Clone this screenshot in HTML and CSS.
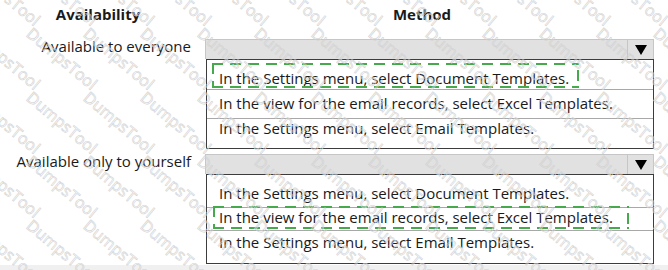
FILE: index.html
```html
<!DOCTYPE html>
<html>
<head>
    <meta charset="UTF-8">
    <title>Availability and Method</title>
    <link rel="stylesheet" href="styles.css">
</head>
<body>
    <div class="sheet">
        <div class="heads">
            <div class="head head-availability">Availability</div>
            <div class="head head-method">Method</div>
        </div>

        <!-- First answer area -->
        <div class="question q-first">
            <div class="label">Available to everyone</div>
            <div class="field">
                <div class="select-bar"><span class="arrow"><span class="tri"></span></span></div>
                <div class="options">
                    <div class="option r1"><span class="pick pick-a">In the Settings menu, select Document Templates.</span></div>
                    <div class="option r2">In the view for the email records, select Excel Templates.</div>
                    <div class="option r3">In the Settings menu, select Email Templates.</div>
                </div>
            </div>
        </div>

        <!-- Second answer area -->
        <div class="question q-second">
            <div class="label">Available only to yourself</div>
            <div class="field">
                <div class="select-bar"><span class="arrow"><span class="tri"></span></span></div>
                <div class="options">
                    <div class="option s1">In the Settings menu, select Document Templates.</div>
                    <div class="option s2"><span class="pick pick-b">In the view for the email records, select Excel Templates.</span></div>
                    <div class="option s3">In the Settings menu, select Email Templates.</div>
                </div>
            </div>
        </div>

        <div class="strip"></div>

        <!-- faint diagonal watermark over everything -->
        <div class="watermark">
            <span>DumpsTool</span><span>DumpsTool</span><span>DumpsTool</span><span>DumpsTool</span><span>DumpsTool</span><span>DumpsTool</span><span>DumpsTool</span><span>DumpsTool</span><span>DumpsTool</span><span>DumpsTool</span><span>DumpsTool</span><span>DumpsTool</span><span>DumpsTool</span>
            <span>DumpsTool</span><span>DumpsTool</span><span>DumpsTool</span><span>DumpsTool</span><span>DumpsTool</span><span>DumpsTool</span><span>DumpsTool</span><span>DumpsTool</span><span>DumpsTool</span><span>DumpsTool</span><span>DumpsTool</span><span>DumpsTool</span><span>DumpsTool</span>
            <span>DumpsTool</span><span>DumpsTool</span><span>DumpsTool</span><span>DumpsTool</span><span>DumpsTool</span><span>DumpsTool</span><span>DumpsTool</span><span>DumpsTool</span><span>DumpsTool</span><span>DumpsTool</span><span>DumpsTool</span><span>DumpsTool</span><span>DumpsTool</span>
            <span>DumpsTool</span><span>DumpsTool</span><span>DumpsTool</span><span>DumpsTool</span><span>DumpsTool</span><span>DumpsTool</span><span>DumpsTool</span><span>DumpsTool</span><span>DumpsTool</span><span>DumpsTool</span><span>DumpsTool</span><span>DumpsTool</span><span>DumpsTool</span>
            <span>DumpsTool</span><span>DumpsTool</span><span>DumpsTool</span><span>DumpsTool</span><span>DumpsTool</span><span>DumpsTool</span><span>DumpsTool</span><span>DumpsTool</span><span>DumpsTool</span><span>DumpsTool</span><span>DumpsTool</span><span>DumpsTool</span><span>DumpsTool</span>
        </div>
    </div>
</body>
</html>
```

FILE: styles.css
```css
body {
    margin: 0;
    background-color: #FFFFFF;
    font-family: "Open Sans", "Noto Sans", sans-serif;
    font-size: 15px;
    color: #1A1A1A;
}
.sheet {
    position: relative;
    width: 668px;
    height: 270px;
    overflow: hidden;
}
.heads {
    display: flex;
    margin-top: 4px;
    line-height: 20px;
    font-weight: bold;
}
.head-availability {
    width: 196px;
    text-align: center;
}
.head-method {
    width: 434px;
    margin-left: 9px;
    text-align: center;
}
.question {
    display: flex;
    align-items: flex-start;
}
.q-first {
    margin-top: 15px;
}
.q-second {
    margin-top: 5px;
}
.label {
    width: 191px;
    text-align: right;
    line-height: 20px;
    margin-top: -3px;
}
.field {
    width: 449px;
    margin-left: 14px;
}
/* Grey dropdown header with arrow box */
.select-bar {
    box-sizing: border-box;
    height: 20px;
    border: 1px solid #C6C6C6;
    border-bottom: none;
    background-color: #E1E1E1;
    display: flex;
    justify-content: flex-end;
}
.arrow {
    width: 25px;
    border-left: 1px solid #C6C6C6;
    display: flex;
    align-items: center;
    justify-content: center;
}
.tri {
    width: 0;
    height: 0;
    border-left: 6px solid transparent;
    border-right: 6px solid transparent;
    border-top: 10px solid #000000;
    margin-top: 1px;
}
.options {
    margin-left: 1px;
    border: 1px solid #3C3C3C;
    background-color: #FFFFFF;
}
.option {
    padding-left: 12px;
    line-height: 20px;
    border-bottom: 1px solid #A8A8A8;
    white-space: nowrap;
}
.option:last-child {
    border-bottom: none;
}
.r1 { padding-top: 8px; padding-bottom: 1px; }
.r2 { padding-top: 3px; padding-bottom: 5px; }
.r3 { line-height: 18px; padding-bottom: 11px; }
.s1 { padding-top: 8px; padding-bottom: 4px; }
.s2 { line-height: 18px; padding-bottom: 4px; }
.s3 { padding-top: 1px; padding-bottom: 11px; }
/* Green dashed frame marking the chosen answer */
.pick {
    position: relative;
}
.pick::before {
    content: "";
    position: absolute;
    background:
        linear-gradient(to right, #46A94B 62%, transparent 0) top left / 18px 2px repeat-x,
        linear-gradient(to right, #46A94B 62%, transparent 0) bottom left / 18px 2px repeat-x,
        linear-gradient(to bottom, #46A94B 62%, transparent 0) top left / 2px 18px repeat-y,
        linear-gradient(to bottom, transparent 40%, #46A94B 0) top right / 2px 18px repeat-y;
}
.pick-a::before {
    top: -5px;
    bottom: 0;
    left: -7px;
    right: -10px;
}
.pick-b::before {
    top: -1px;
    bottom: -2px;
    left: -6px;
    right: -16px;
}
.strip {
    margin-top: 1px;
    height: 6px;
    background-color: #F0F0F0;
}
.watermark {
    position: absolute;
    left: -22px;
    top: -40px;
    display: grid;
    grid-template-columns: repeat(13, 57px);
    grid-auto-rows: 64px;
    pointer-events: none;
    font-size: 16px;
    line-height: 18px;
    color: transparent;
    -webkit-text-stroke: 0.6px #D2D2D2;
}
.watermark span {
    white-space: nowrap;
    transform: rotate(40deg);
    transform-origin: 0 0;
}
```
